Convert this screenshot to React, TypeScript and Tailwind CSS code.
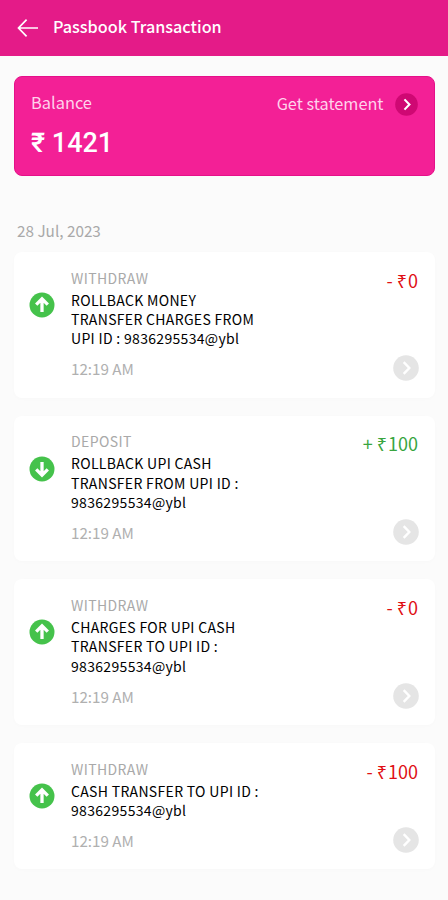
import React from "react";

type Item = { kind: string; up: boolean; lines: string[]; sign: string; amount: string; green: boolean };

const upi = "9836295534@ybl";

const items: Item[] = [
  { kind: "WITHDRAW", up: true, lines: ["ROLLBACK MONEY", "TRANSFER CHARGES FROM", "UPI ID : " + upi], sign: "-", amount: "0", green: false },
  { kind: "DEPOSIT", up: false, lines: ["ROLLBACK UPI CASH", "TRANSFER FROM UPI ID :", upi], sign: "+", amount: "100", green: true },
  { kind: "WITHDRAW", up: true, lines: ["CHARGES FOR UPI CASH", "TRANSFER TO UPI ID :", upi], sign: "-", amount: "0", green: false },
  { kind: "WITHDRAW", up: true, lines: ["CASH TRANSFER TO UPI ID :", upi], sign: "-", amount: "100", green: false },
];

function Chevron({ className, size }: { className: string; size: number }) {
  return (
    <svg width={size} height={size} viewBox="0 0 26 26" fill="none" className={className}>
      <circle cx="13" cy="13" r="12.8" fill="currentColor" />
      <path d="M10.7 7.2L16.3 13L10.7 18.8" stroke="white" strokeWidth="2.4" />
    </svg>
  );
}

function Direction({ up }: { up: boolean }) {
  return (
    <svg width="26" height="26" viewBox="0 0 26 26" fill="none" className={up ? "" : "rotate-180"}>
      <circle cx="13" cy="13" r="12.5" fill="#45c24b" />
      <path d="M13 19.9V7.5M7.2 12.6L13 6.9L18.8 12.6" stroke="white" strokeWidth="3.3" />
    </svg>
  );
}

export default function App() {
  return (
    <div className="h-[900px] w-[448px] overflow-hidden bg-[#fbfbfb] font-['Noto_Sans_CJK_SC','Noto_Sans',sans-serif] whitespace-nowrap">
      <header className="flex h-14 items-center bg-[#e41b88] pl-[17px] text-white">
        <svg width="22" height="20" viewBox="0 0 22 20" fill="none" stroke="currentColor" strokeWidth="1.7">
          <path d="M21 10H1.5M9.6 1.7L1.5 10L9.6 18.3" />
        </svg>
        <h1 className="-mt-1 ml-[14px] text-[16.2px] leading-6 font-medium">Passbook Transaction</h1>
      </header>

      <section className="mr-[13px] ml-[14px] mt-5 flex h-[100px] justify-between rounded-lg border border-[#e5108a] bg-[#f32096] pt-[13px] pr-4 pl-4 text-white">
        <div>
          <p className="-mt-[0.5px] text-[16.4px] leading-6 text-[#ffd3ec]">Balance</p>
          <p className="mt-[13px] font-['Roboto',sans-serif] text-[27px] leading-8 font-medium">₹ 1421</p>
        </div>
        <div className="mt-[2px] flex h-6 items-center gap-[11.5px] text-[16.3px] leading-6 text-[#ffd3ec]">
          <span className="-mt-[2px]">Get statement</span>
          <Chevron size={23} className="text-[#cf0873]" />
        </div>
      </section>

      <main className="pt-[42px] pr-[13px] pl-[14px]">
        <p className="pl-[3px] text-[15.3px] leading-6 text-[#a9a9a9]">28 Jul, 2023</p>
        <div className="mt-[10px] flex flex-col gap-[18px]">
          {items.map((t, i) => (
            <article key={i} className="flex justify-between rounded-lg bg-white pr-4 pb-[19.3px] pl-[14.5px] shadow-[0_1px_4px_rgba(0,0,0,0.015)]">
              <div className="flex">
                <div className="w-[42.5px] pt-10">
                  <Direction up={t.up} />
                </div>
                <div className="pt-[15.7px]">
                  <p className="text-[14px] leading-5 tracking-[0.4px] text-[#a9a9a9]">{t.kind}</p>
                  <div className="mt-[3px] text-[14px] leading-[19.3px] tracking-[0.32px] text-black">
                    {t.lines.map((text) => (
                      <p key={text}>{text}</p>
                    ))}
                  </div>
                  <p className="mt-[9.8px] text-[15.2px] leading-5 text-[#b0b0b0]">12:19 AM</p>
                </div>
              </div>
              <div className="-mb-[3px] flex flex-col items-end justify-between pt-[15.6px]">
                <p className={"mr-px text-[18px] leading-6 " + (t.green ? "text-[#39a53f]" : "text-[#e01015]")}>
                  {t.sign} <span className="tracking-[1px]">₹</span>{t.amount}
                </p>
                <Chevron size={26} className="text-[#e5e5e5]" />
              </div>
            </article>
          ))}
        </div>
      </main>
    </div>
  );
}
